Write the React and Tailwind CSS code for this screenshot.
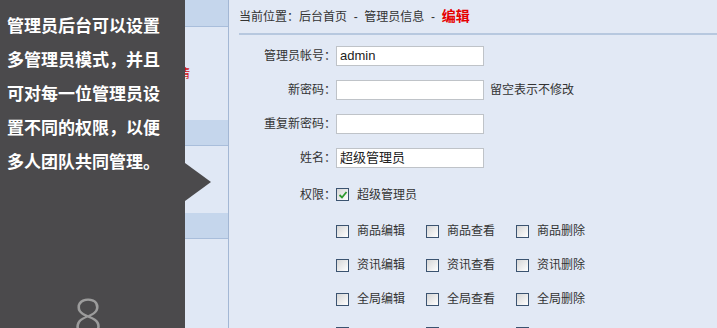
import React from 'react'

const font = { fontFamily: '"Liberation Sans", "Noto Sans CJK SC", sans-serif' }

function Box({ checked }) {
  return (
    <span className="w-[13px] h-[13px] border border-[#3b5370] bg-gradient-to-br from-[#d6d6d6] to-white flex items-center justify-center shrink-0">
      {checked && (
        <svg width="10" height="10" viewBox="0 0 10 10">
          <path d="M1.5 5 L4 7.5 L8.5 2" fill="none" stroke="#2e9a2e" strokeWidth="1.8" />
        </svg>
      )}
    </span>
  )
}

function Row({ label, children, h = 'h-[34px]' }) {
  return (
    <div className={`flex items-center shrink-0 ${h}`}>
      <div className="w-[107px] text-right text-[12px] text-[#333]">{label}</div>
      <div className="flex items-center">{children}</div>
    </div>
  )
}

function Field({ value }) {
  return (
    <div className="w-[148px] h-[20px] bg-white border border-[#bfc3c8] flex items-center px-[3px] text-[13px] text-[#222]">
      {value}
    </div>
  )
}

const perms = [
  ['商品编辑', '商品查看', '商品删除'],
  ['资讯编辑', '资讯查看', '资讯删除'],
  ['全局编辑', '全局查看', '全局删除'],
  ['', '', ''],
]

export default function App() {
  return (
    <div className="relative w-[717px] h-[328px] overflow-hidden flex bg-[#e2e9f5]" style={font}>
      {/* sidebar */}
      <div className="w-[229px] shrink-0 flex flex-col bg-[#e0e8f5] border-r border-[#a3b7d4]">
        <div className="h-[27px] shrink-0 bg-[#c5d6ec] border-b border-[#a9bedb]" />
        <div className="h-[93px] shrink-0 flex items-center">
          <span className="ml-[130px] text-[12px] text-[#d01010]">管理员详情</span>
        </div>
        <div className="h-[26px] shrink-0 bg-[#c5d6ec] border-b border-[#a9bedb]" />
        <div className="h-[67px] shrink-0" />
        <div className="h-[26px] shrink-0 bg-[#c5d6ec] border-b border-[#a9bedb]" />
      </div>

      {/* main */}
      <div className="flex-1 flex flex-col">
        <div className="shrink-0 ml-[10px] h-[35px] flex items-center border-b-2 border-[#b7c8df] text-[12px] text-[#333]">
          <span>当前位置：后台首页 &nbsp;- &nbsp;管理员信息 &nbsp;- &nbsp;</span>
          <span className="text-[14px] font-bold text-[#e60000]">编辑</span>
        </div>
        <div className="shrink-0 pt-[4px] flex flex-col">
          <Row label="管理员帐号："><Field value="admin" /></Row>
          <Row label="新密码：">
            <Field value="" />
            <span className="ml-[6px] text-[12px] text-[#333]">留空表示不修改</span>
          </Row>
          <Row label="重复新密码："><Field value="" /></Row>
          <Row label="姓名："><Field value="超级管理员" /></Row>
          <Row label="权限：" h="h-[39px]">
            <Box checked />
            <span className="ml-[8px] text-[12px] text-[#333]">超级管理员</span>
          </Row>
          {perms.map((r, i) => (
            <div key={i} className="shrink-0 flex items-center h-[34px] pl-[107px]">
              {r.map((p, j) => (
                <div key={j} className="w-[90px] flex items-center">
                  <Box />
                  <span className="ml-[8px] text-[12px] text-[#333]">{p}</span>
                </div>
              ))}
            </div>
          ))}
        </div>
      </div>

      {/* overlay caption */}
      <div className="absolute left-0 top-0 w-[185px] h-full bg-[#4b4a4c] flex flex-col">
        <div className="pt-[8px] pl-[7px] text-[17px] font-bold leading-[34px] text-white" style={{ fontFamily: '"Noto Sans CJK SC", sans-serif' }}>
          <div>管理员后台可以设置</div>
          <div>多管理员模式，并且</div>
          <div>可对每一位管理员设</div>
          <div>置不同的权限，以便</div>
          <div>多人团队共同管理。</div>
        </div>
        <div className="mt-auto mb-[-14px] pr-[9px] text-center text-[52px] leading-none font-light text-[#9c9c9c]" style={{ fontFamily: '"Open Sans", sans-serif' }}>
          8
        </div>
      </div>
      <svg className="absolute left-[185px] top-[163px]" width="27" height="38" viewBox="0 0 27 38">
        <polygon points="0,0 26,19 0,38" fill="#4b4a4c" />
      </svg>
    </div>
  )
}
